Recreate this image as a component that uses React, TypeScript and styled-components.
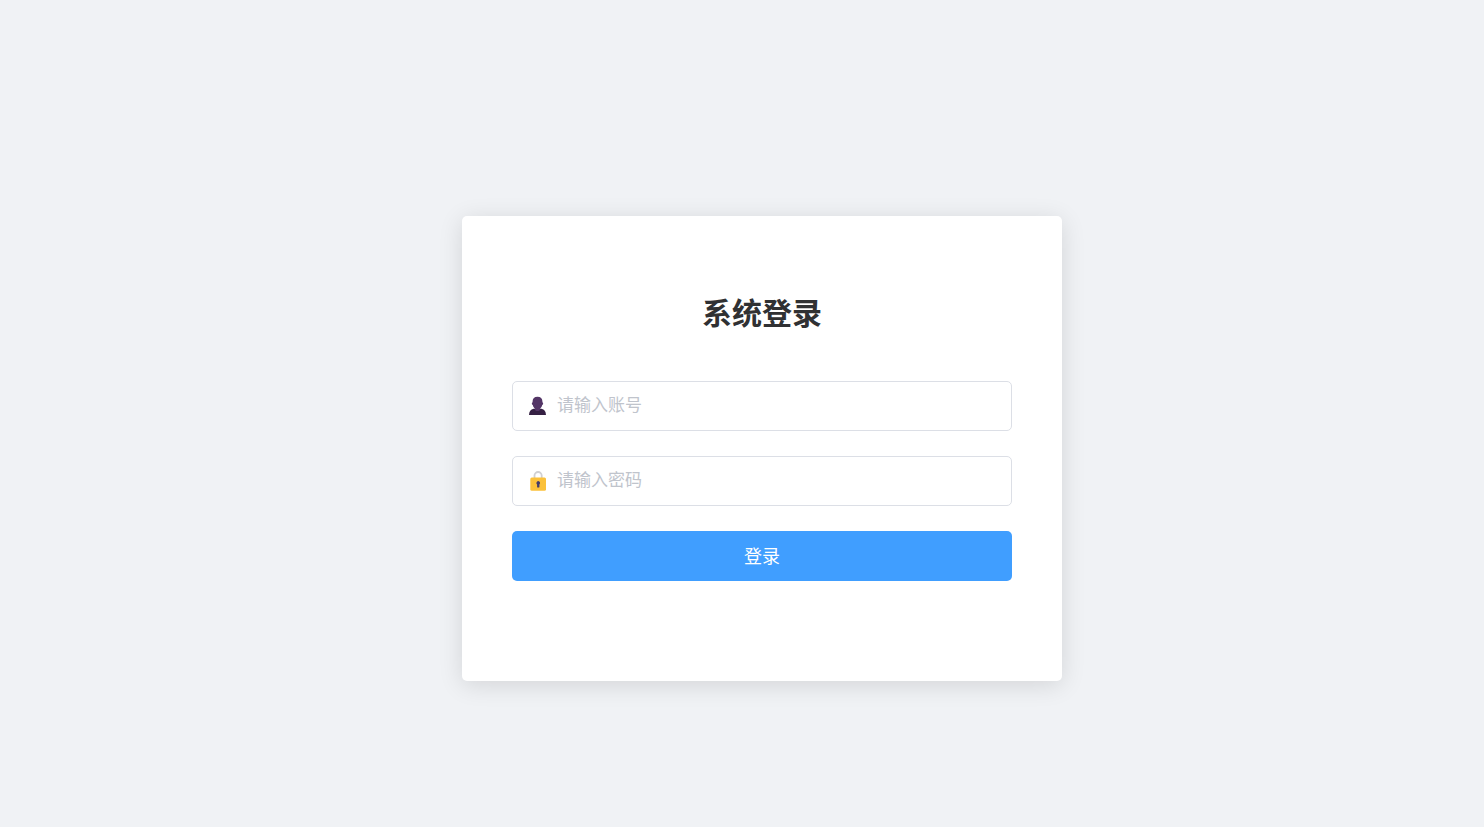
import React from "react";
import styled, { createGlobalStyle } from "styled-components";

const GlobalStyle = createGlobalStyle`
  * {
    box-sizing: border-box;
  }

  body {
    margin: 0;
    background: #f0f2f5;
    color: #303133;
    font-family: "Noto Sans CJK SC", sans-serif;
  }
`;

const Page = styled.main`
  display: flex;
  align-items: center;
  justify-content: center;
  min-height: 100vh;
  padding: 70px 0 0 40px;
`;

const Card = styled.form`
  display: flex;
  flex-direction: column;
  gap: 25px;
  width: 100%;
  max-width: 600px;
  padding: 75px 50px 100px;
  border-radius: 5px;
  background: #ffffff;
  box-shadow: 0 4px 24px rgba(0, 0, 0, 0.12);
`;

const Title = styled.h1`
  margin: 0 0 25px;
  font-size: 30px;
  font-weight: 700;
  line-height: 40px;
  text-align: center;
`;

const Field = styled.label`
  display: flex;
  align-items: center;
  gap: 9px;
  height: 50px;
  padding: 0 15px;
  border: 1px solid #dcdfe6;
  border-radius: 5px;
  background: #ffffff;

  &:focus-within {
    border-color: #409eff;
  }
`;

const Icon = styled.svg`
  flex: none;
  width: 20px;
  height: 20px;
`;

const TextInput = styled.input`
  flex: 1;
  min-width: 0;
  height: 48px;
  padding: 0 0 5px;
  border: 0;
  outline: 0;
  background: transparent;
  color: #606266;
  font-family: inherit;
  font-size: 17px;

  &::placeholder {
    color: #c0c4cc;
    opacity: 1;
  }
`;

const SubmitButton = styled.button`
  height: 50px;
  padding: 0 0 2px;
  border: 0;
  border-radius: 5px;
  background: #409eff;
  color: #ffffff;
  font-family: inherit;
  font-size: 18px;
  cursor: pointer;
`;

function UserIcon() {
  return (
    <Icon viewBox="0 0 20 20" aria-hidden="true">
      <path
        fill="#352043"
        d="M1 19c.2-3.800 1.600-5.500 4.600-6.300h7.800c3 .8 4.400 2.500 4.600 6.300z"
      />
      <path
        fill="#533566"
        d="M9.500 .8c3.200 0 4.900 1.800 4.900 4.500v1c1 0 1.100 2.600-.2 2.800-.4 1.700-1 2.600-2 3.300v1.100c0 .8-1 1.500-2.700 1.500s-2.700-.7-2.700-1.500v-1.100C5.800 11.700 5.200 10.800 4.800 9.100 3.500 8.900 3.600 6.300 4.600 6.300v-1C4.600 2.600 6.300 .8 9.500 .8z"
      />
    </Icon>
  );
}

function LockIcon() {
  return (
    <Icon viewBox="0 0 20 20" aria-hidden="true">
      <path
        fill="none"
        stroke="#d0d0d3"
        strokeWidth="1.800"
        d="M6.500 8V4.600a3.600 3.600 0 0 1 7.200 0V8"
      />
      <rect x="2.300" y="6.600" width="15.700" height="13.200" rx="1.500" fill="#fbc13b" />
      <path
        fill="#433b6b"
        d="M10.200 10a2 2 0 0 1 1.200 3.500v2.500c0 .8-2.300.8-2.300 0v-2.500a2 2 0 0 1 1.100-3.500z"
      />
    </Icon>
  );
}

export default function App() {
  return (
    <>
      <GlobalStyle />
      <Page>
        <Card onSubmit={(event: React.FormEvent) => event.preventDefault()}>
          <Title>系统登录</Title>
          <Field>
            <UserIcon />
            <TextInput
              type="text"
              name="username"
              aria-label="账号"
              autoComplete="username"
              placeholder="请输入账号"
            />
          </Field>
          <Field>
            <LockIcon />
            <TextInput
              type="password"
              name="password"
              aria-label="密码"
              autoComplete="current-password"
              placeholder="请输入密码"
            />
          </Field>
          <SubmitButton type="submit">登录</SubmitButton>
        </Card>
      </Page>
    </>
  );
}
